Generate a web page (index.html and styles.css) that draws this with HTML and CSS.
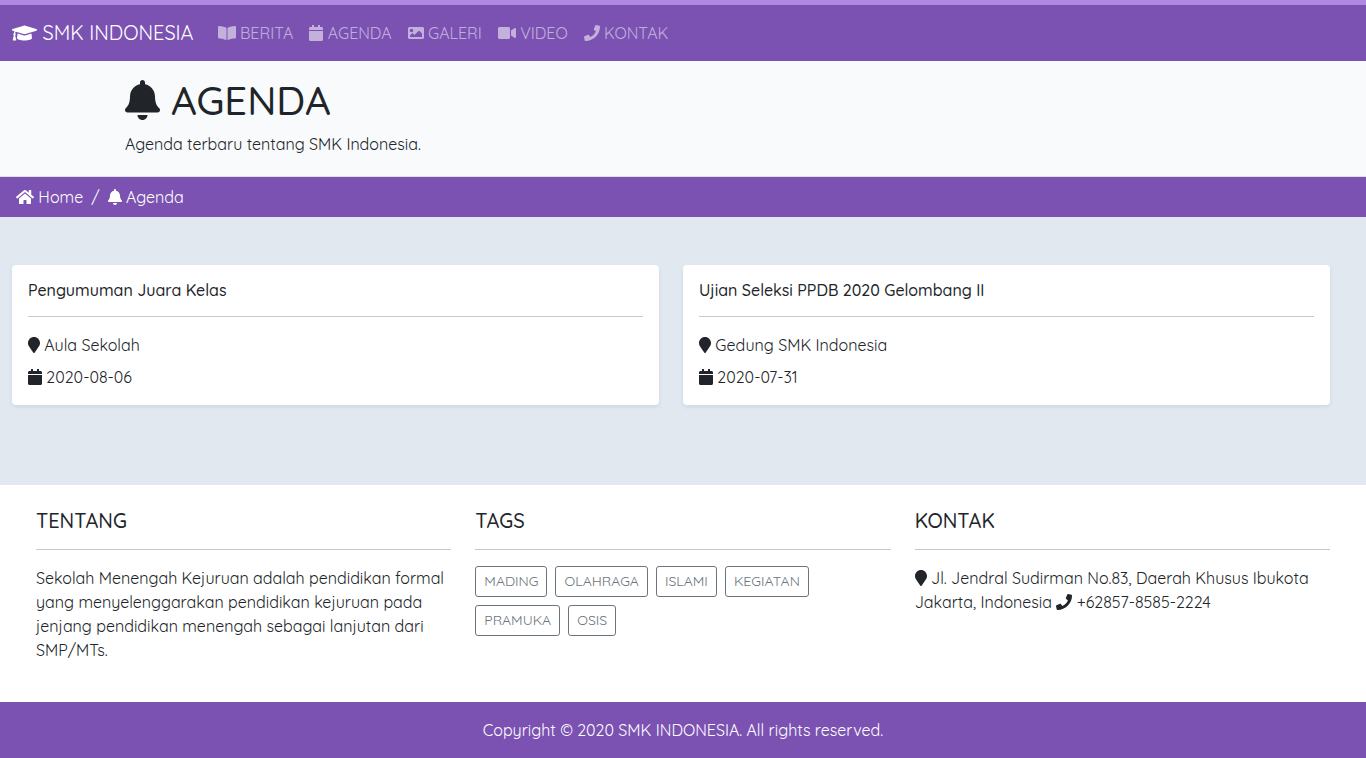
FILE: index.html
```
<!DOCTYPE html>
<html lang="id">
<head>
<meta charset="utf-8">
<meta name="viewport" content="width=device-width, initial-scale=1">
<title>Agenda - SMK Indonesia</title>
<link rel="stylesheet" href="styles.css">
</head>
<body>
<svg class="sprite" aria-hidden="true">
  <symbol id="cap" viewBox="0 0 640 512"><path d="M622.34 153.2L343.4 67.5c-15.2-4.67-31.6-4.67-46.79 0L17.66 153.2c-23.54 7.23-23.54 38.36 0 45.59l48.63 14.94c-10.67 13.19-17.23 29.28-17.88 46.9C38.78 266.15 32 276.11 32 288c0 10.78 5.68 19.85 13.86 25.65L20.33 428.53C18.11 438.52 25.71 448 35.94 448h56.11c10.24 0 17.84-9.48 15.62-19.47L82.14 313.65C90.32 307.85 96 298.78 96 288c0-11.57-6.47-21.25-15.66-26.87.76-15.02 8.44-28.3 20.69-36.72L296.6 284.5c9.06 2.78 26.44 6.25 46.79 0l278.95-85.7c23.55-7.24 23.55-38.36 0-45.6zM352.79 315.09c-28.53 8.76-52.84 3.92-65.59 0l-145.02-44.55L128 384c0 35.35 85.96 64 192 64s192-28.65 192-64l-14.18-113.47-145.03 44.56z"/></symbol>
  <symbol id="book" viewBox="0 0 576 512"><path d="M542.22 32.05c-54.8 3.11-163.72 14.43-230.96 55.59-4.64 2.84-7.27 7.89-7.27 13.17v363.87c0 11.55 12.63 18.85 23.28 13.49 69.18-34.82 169.23-44.32 218.7-46.92 16.89-.89 30.02-14.43 30.02-30.66V62.75c.01-17.71-15.35-31.74-33.77-30.7zM264.73 87.64C197.5 46.48 88.58 35.17 33.78 32.05 15.36 31.01 0 45.04 0 62.75V400.6c0 16.24 13.13 29.78 30.02 30.66 49.49 2.6 149.59 12.11 218.77 46.95 10.62 5.35 23.21-1.94 23.21-13.46V100.63c0-5.29-2.62-10.14-7.27-12.99z"/></symbol>
  <symbol id="calendar" viewBox="0 0 448 512"><path d="M12 192h424c6.6 0 12 5.4 12 12v260c0 26.5-21.5 48-48 48H48c-26.5 0-48-21.5-48-48V204c0-6.6 5.4-12 12-12zm436-44v-36c0-26.5-21.5-48-48-48h-48V12c0-6.6-5.4-12-12-12h-40c-6.6 0-12 5.4-12 12v52H160V12c0-6.6-5.4-12-12-12h-40c-6.6 0-12 5.4-12 12v52H48C21.5 64 0 85.5 0 112v36c0 6.6 5.4 12 12 12h424c6.6 0 12-5.4 12-12z"/></symbol>
  <symbol id="image" viewBox="0 0 512 512"><path d="M464 448H48c-26.51 0-48-21.49-48-48V112c0-26.51 21.49-48 48-48h416c26.51 0 48 21.49 48 48v288c0 26.51-21.49 48-48 48zM112 120c-30.928 0-56 25.072-56 56s25.072 56 56 56 56-25.072 56-56-25.072-56-56-56zM64 384h384V272l-87.515-87.515c-4.686-4.686-12.284-4.686-16.971 0L208 320l-55.515-55.515c-4.686-4.686-12.284-4.686-16.971 0L64 336v48z"/></symbol>
  <symbol id="video" viewBox="0 0 576 512"><path d="M336.2 64H47.8C21.4 64 0 85.4 0 111.8v288.4C0 426.6 21.4 448 47.8 448h288.4c26.4 0 47.8-21.4 47.8-47.8V111.8c0-26.4-21.4-47.8-47.8-47.8zm189.4 37.7L416 177.3v157.4l109.6 75.5c21.2 14.6 50.4-.3 50.4-25.8V127.5c0-25.4-29.1-40.4-50.4-25.8z"/></symbol>
  <symbol id="phone" viewBox="0 0 512 512"><path d="M493.4 24.6l-104-24c-11.3-2.6-22.9 3.3-27.5 13.9l-48 112c-4.2 9.8-1.4 21.3 6.9 28l60.6 49.6c-36 76.7-98.9 140.5-177.2 177.2l-49.6-60.6c-6.8-8.3-18.2-11.1-28-6.9l-112 48C3.9 366.5-2 378.1.6 389.4l24 104C27.1 504.2 36.7 512 48 512c256.1 0 464-207.5 464-464 0-11.2-7.7-20.9-18.6-23.4z"/></symbol>
  <symbol id="bell" viewBox="0 0 448 512"><path d="M224 512c35.32 0 63.97-28.65 63.97-64H160.03c0 35.35 28.65 64 63.97 64zm215.39-149.71c-19.32-20.76-55.47-51.99-55.47-154.29 0-77.7-54.48-139.9-127.94-155.16V32c0-17.67-14.32-32-31.98-32s-31.98 14.33-31.98 32v20.84C118.56 68.1 64.08 130.3 64.08 208c0 102.3-36.15 133.53-55.47 154.29-6 6.45-8.66 14.16-8.61 21.71.11 16.4 12.98 32 32.1 32h383.8c19.12 0 32-15.6 32.1-32 .05-7.55-2.61-15.27-8.61-21.71z"/></symbol>
  <symbol id="home" viewBox="0 0 576 512"><path d="M280.37 148.26L96 300.11V464a16 16 0 0 0 16 16l112.06-.29a16 16 0 0 0 15.92-16V368a16 16 0 0 1 16-16h64a16 16 0 0 1 16 16v95.64a16 16 0 0 0 16 16.05L464 480a16 16 0 0 0 16-16V300L295.67 148.26a12.19 12.19 0 0 0-15.3 0zM571.6 251.47L488 182.56V44.05a12 12 0 0 0-12-12h-56a12 12 0 0 0-12 12v72.61L318.47 43a48 48 0 0 0-61 0L4.34 251.47a12 12 0 0 0-1.6 16.9l25.5 31A12 12 0 0 0 45.15 301l235.22-193.74a12.19 12.19 0 0 1 15.3 0L530.9 301a12 12 0 0 0 16.9-1.6l25.5-31a12 12 0 0 0-1.7-16.93z"/></symbol>
  <symbol id="marker" viewBox="0 0 384 512"><path d="M172.268 501.67C26.97 291.031 0 269.413 0 192 0 85.961 85.961 0 192 0s192 85.961 192 192c0 77.413-26.97 99.031-172.268 309.67-9.535 13.774-29.93 13.773-39.464 0z"/></symbol>
</svg>

<nav class="navbar">
  <a class="brand" href="#"><svg class="icon w20"><use href="#cap"/></svg> SMK INDONESIA</a>
  <ul class="menu">
    <li><a href="#"><svg class="icon w18"><use href="#book"/></svg> BERITA</a></li>
    <li><a href="#"><svg class="icon w14"><use href="#calendar"/></svg> AGENDA</a></li>
    <li><a href="#"><svg class="icon w16"><use href="#image"/></svg> GALERI</a></li>
    <li><a href="#"><svg class="icon w18"><use href="#video"/></svg> VIDEO</a></li>
    <li><a href="#"><svg class="icon w16"><use href="#phone"/></svg> KONTAK</a></li>
  </ul>
</nav>

<header class="page-head">
  <div class="container">
    <h1><svg class="icon w14"><use href="#bell"/></svg> AGENDA</h1>
    <p>Agenda terbaru tentang SMK Indonesia.</p>
  </div>
</header>

<nav class="crumbs" aria-label="Breadcrumb">
  <ol>
    <li><a href="#"><svg class="icon w18"><use href="#home"/></svg> Home</a></li>
    <li><svg class="icon w14"><use href="#bell"/></svg> Agenda</li>
  </ol>
</nav>

<main class="agenda">
  <article class="card">
    <h2>Pengumuman Juara Kelas</h2>
    <hr>
    <p><svg class="icon w12"><use href="#marker"/></svg> Aula Sekolah</p>
    <p><svg class="icon w14"><use href="#calendar"/></svg> 2020-08-06</p>
  </article>
  <article class="card">
    <h2>Ujian Seleksi PPDB 2020 Gelombang II</h2>
    <hr>
    <p><svg class="icon w12"><use href="#marker"/></svg> Gedung SMK Indonesia</p>
    <p><svg class="icon w14"><use href="#calendar"/></svg> 2020-07-31</p>
  </article>
</main>

<footer>
  <div class="info">
    <section>
      <h3>TENTANG</h3>
      <hr>
      <p>Sekolah Menengah Kejuruan adalah pendidikan formal yang menyelenggarakan pendidikan kejuruan pada jenjang pendidikan menengah sebagai lanjutan dari SMP/MTs.</p>
    </section>
    <section>
      <h3>TAGS</h3>
      <hr>
      <div class="tags">
        <a href="#">MADING</a>
        <a href="#">OLAHRAGA</a>
        <a href="#">ISLAMI</a>
        <a href="#">KEGIATAN</a>
        <a href="#">PRAMUKA</a>
        <a href="#">OSIS</a>
      </div>
    </section>
    <section>
      <h3>KONTAK</h3>
      <hr>
      <p><svg class="icon w12"><use href="#marker"/></svg> Jl. Jendral Sudirman No.83, Daerah Khusus Ibukota Jakarta, Indonesia <svg class="icon w16"><use href="#phone"/></svg> +62857-8585-2224</p>
    </section>
  </div>
  <p class="copyright">Copyright © 2020 SMK INDONESIA. All rights reserved.</p>
</footer>
</body>
</html>
```
FILE: styles.css
```
* {
  box-sizing: border-box;
}

body {
  margin: 0;
  font: 400 16px/24px Quicksand, Inter, sans-serif;
  color: #212529;
  background: #fff;
}

h1, h2, h3, p, ul, ol {
  margin: 0;
  padding: 0;
}

ul, ol {
  list-style: none;
}

a {
  color: inherit;
  text-decoration: none;
}

hr {
  height: 1px;
  margin: 16px 0;
  border: 0;
  background: #c7c8c9;
}

.sprite {
  display: none;
}

.icon {
  height: 1em;
  fill: currentColor;
  vertical-align: -0.125em;
}

.w12 { width: 0.75em; }
.w14 { width: 0.875em; }
.w16 { width: 1em; }
.w18 { width: 1.125em; }
.w20 { width: 1.25em; }

.navbar {
  display: flex;
  align-items: center;
  gap: 24px;
  padding: 8px 12px;
  border-top: 5px solid #b088e2;
  background: #7b52b2;
  color: #fff;
}

.brand {
  font-size: 20px;
  line-height: 30px;
}

.menu {
  display: flex;
  gap: 16px;
  padding: 8px 0;
  color: rgba(255, 255, 255, 0.55);
}

.page-head {
  padding: 15px 0 20px;
  border-bottom: 1px solid #dee2e6;
  background: #f8fafc;
}

.container {
  max-width: 1140px;
  margin: 0 auto;
  padding: 0 12px;
}

h1 {
  margin-bottom: 8px;
  font-size: 40px;
  font-weight: 500;
  line-height: 48px;
}

.crumbs {
  padding: 8px 16px;
  background: #7b52b2;
  color: #fff;
}

.crumbs ol {
  display: flex;
}

.crumbs li + li::before {
  content: "/";
  padding: 0 8px;
}

.agenda {
  display: grid;
  grid-template-columns: 1fr 1fr;
  gap: 24px;
  padding: 48px 36px 80px 12px;
  background: #e2e8f0;
}

.card {
  padding: 16px;
  border-radius: 4px;
  background: #fff;
  box-shadow: 0 2px 4px rgba(0, 0, 0, 0.075);
}

.card h2 {
  font-size: 16px;
  font-weight: 500;
  line-height: 19px;
}

.card p + p {
  margin-top: 8px;
}

.info {
  display: grid;
  grid-template-columns: repeat(3, 1fr);
  gap: 24px;
  padding: 24px 36px 40px;
}

.info h3 {
  font-size: 20px;
  font-weight: 500;
  line-height: 24px;
}

.tags {
  display: flex;
  flex-wrap: wrap;
  gap: 8px;
  max-width: 360px;
}

.tags a {
  padding: 4px 8px;
  border: 1px solid #6c757d;
  border-radius: 3px;
  color: #6c757d;
  font-size: 14px;
  line-height: 21px;
}

.copyright {
  padding: 16px;
  background: #7b52b2;
  color: #fff;
  text-align: center;
}
```
